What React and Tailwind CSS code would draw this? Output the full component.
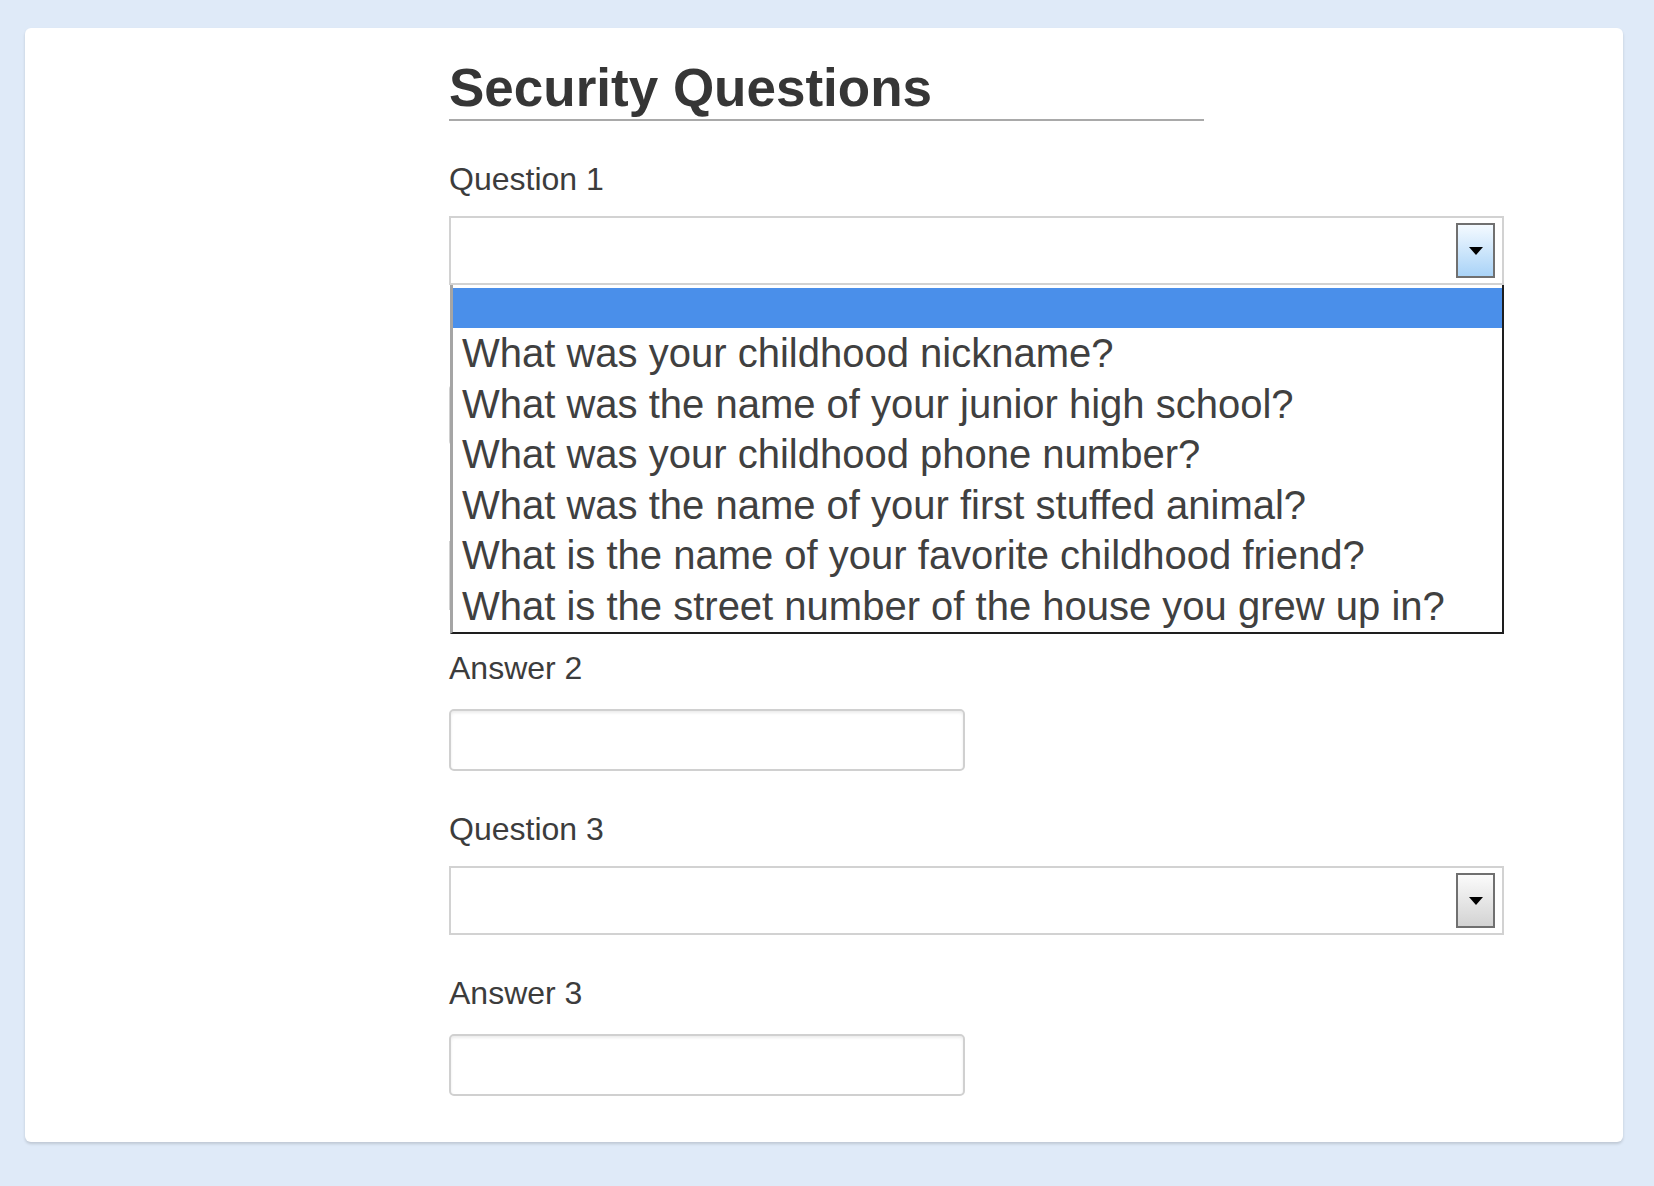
import React from "react";

const font = { fontFamily: '"Liberation Sans", Arial, sans-serif' };

function Label({ children, hidden }) {
  return (
    <div
      className={
        hidden
          ? "invisible text-[32px] leading-[36px] text-[#3c3c3c]"
          : "text-[32px] leading-[36px] text-[#3c3c3c]"
      }
    >
      {children}
    </div>
  );
}

function SelectBox({ focused, children }) {
  return (
    <div className="relative mt-[19px] w-[1055px]">
      <div className="flex h-[69px] w-[1055px] items-center justify-end border-2 border-[#d2d2d2] bg-white pr-[7px]">
        <div
          className={
            focused
              ? "flex h-[55px] w-[39px] items-center justify-center border-2 border-[#707070] bg-gradient-to-b from-[#f4faff] to-[#a9d3f7]"
              : "flex h-[55px] w-[39px] items-center justify-center border-2 border-[#707070] bg-gradient-to-b from-[#fbfbfb] to-[#d3d3d3]"
          }
        >
          <div className="h-0 w-0 border-l-[7px] border-r-[7px] border-t-[8px] border-l-transparent border-r-transparent border-t-black" />
        </div>
      </div>
      {children}
    </div>
  );
}

function InputBox() {
  return (
    <div className="mt-[23px] h-[62px] w-[516px] rounded-[5px] border-2 border-[#d0d0d0] bg-white shadow-[inset_0_2px_3px_rgba(0,0,0,0.08)]" />
  );
}

const options = [
  "What was your childhood nickname?",
  "What was the name of your junior high school?",
  "What was your childhood phone number?",
  "What was the name of your first stuffed animal?",
  "What is the name of your favorite childhood friend?",
  "What is the street number of the house you grew up in?",
];

export default function App() {
  return (
    <div
      className="min-h-[1186px] w-full bg-[#dfeaf8] pl-[25px] pt-[28px]"
      style={font}
    >
      <div className="w-[1598px] rounded-[6px] bg-white pb-[46px] pl-[424px] pt-[30px] shadow-[0_2px_3px_rgba(0,0,0,0.15)]">
        <h1 className="w-[755px] border-b-2 border-[#a9a9a9] pb-[1px] text-[53px] font-bold leading-[60px] text-[#363636]">
          Security Questions
        </h1>

        <div className="mt-[40px] flex flex-col gap-[40px]">
          <div>
            <Label>Question 1</Label>
            <SelectBox focused>
              <div className="absolute left-[1px] right-0 top-full z-10 border-b-2 border-l-[3px] border-r-2 border-b-[#1e1e1e] border-l-[#a5a5a5] border-r-[#1e1e1e] bg-white pt-[3px]">
                <div className="h-[40px] bg-[#4a8fea]" />
                {options.map((o) => (
                  <div
                    key={o}
                    className="whitespace-nowrap pl-[9px] text-[40px] leading-[50.6px] text-[#404040]"
                  >
                    {o}
                  </div>
                ))}
              </div>
            </SelectBox>
          </div>

          <div>
            <Label hidden>Answer 1</Label>
            <InputBox />
          </div>

          <div>
            <Label hidden>Question 2</Label>
            <SelectBox />
          </div>

          <div>
            <Label>Answer 2</Label>
            <InputBox />
          </div>

          <div>
            <Label>Question 3</Label>
            <SelectBox />
          </div>

          <div>
            <Label>Answer 3</Label>
            <InputBox />
          </div>
        </div>
      </div>
    </div>
  );
}
